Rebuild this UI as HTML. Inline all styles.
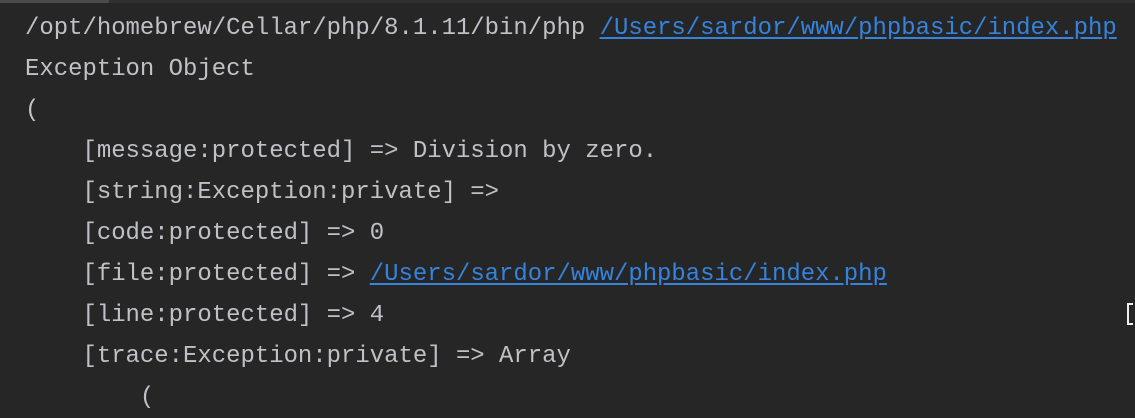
<!DOCTYPE html>
<html><head><style>
html,body{margin:0;padding:0;width:1135px;height:418px;overflow:hidden;background:#262626;}
.top{position:absolute;left:0;top:0;width:1135px;height:3px;background:#303030;}
.top2{position:absolute;left:0;top:0;width:109px;height:3px;background:#4b4b4b;}
pre{position:absolute;left:25px;top:8px;margin:0;font-family:"Liberation Mono",monospace;font-size:23.95px;line-height:41px;color:#bfc1c6;}
a{color:#3583dc;text-decoration:underline;text-underline-offset:3px;}
.cur{position:absolute;left:1127px;top:303px;width:6px;height:22px;border:2px solid #eee;border-right:none;box-sizing:border-box;}
</style></head><body>
<div class="top"></div><div class="top2"></div>
<pre>/opt/homebrew/Cellar/php/8.1.11/bin/php <a>/Users/sardor/www/phpbasic/index.php</a>
Exception Object
(
    [message:protected] =&gt; Division by zero.
    [string:Exception:private] =&gt;
    [code:protected] =&gt; 0
    [file:protected] =&gt; <a>/Users/sardor/www/phpbasic/index.php</a>
    [line:protected] =&gt; 4
    [trace:Exception:private] =&gt; Array
        (
</pre>
<div class="cur"></div>
</body></html>
